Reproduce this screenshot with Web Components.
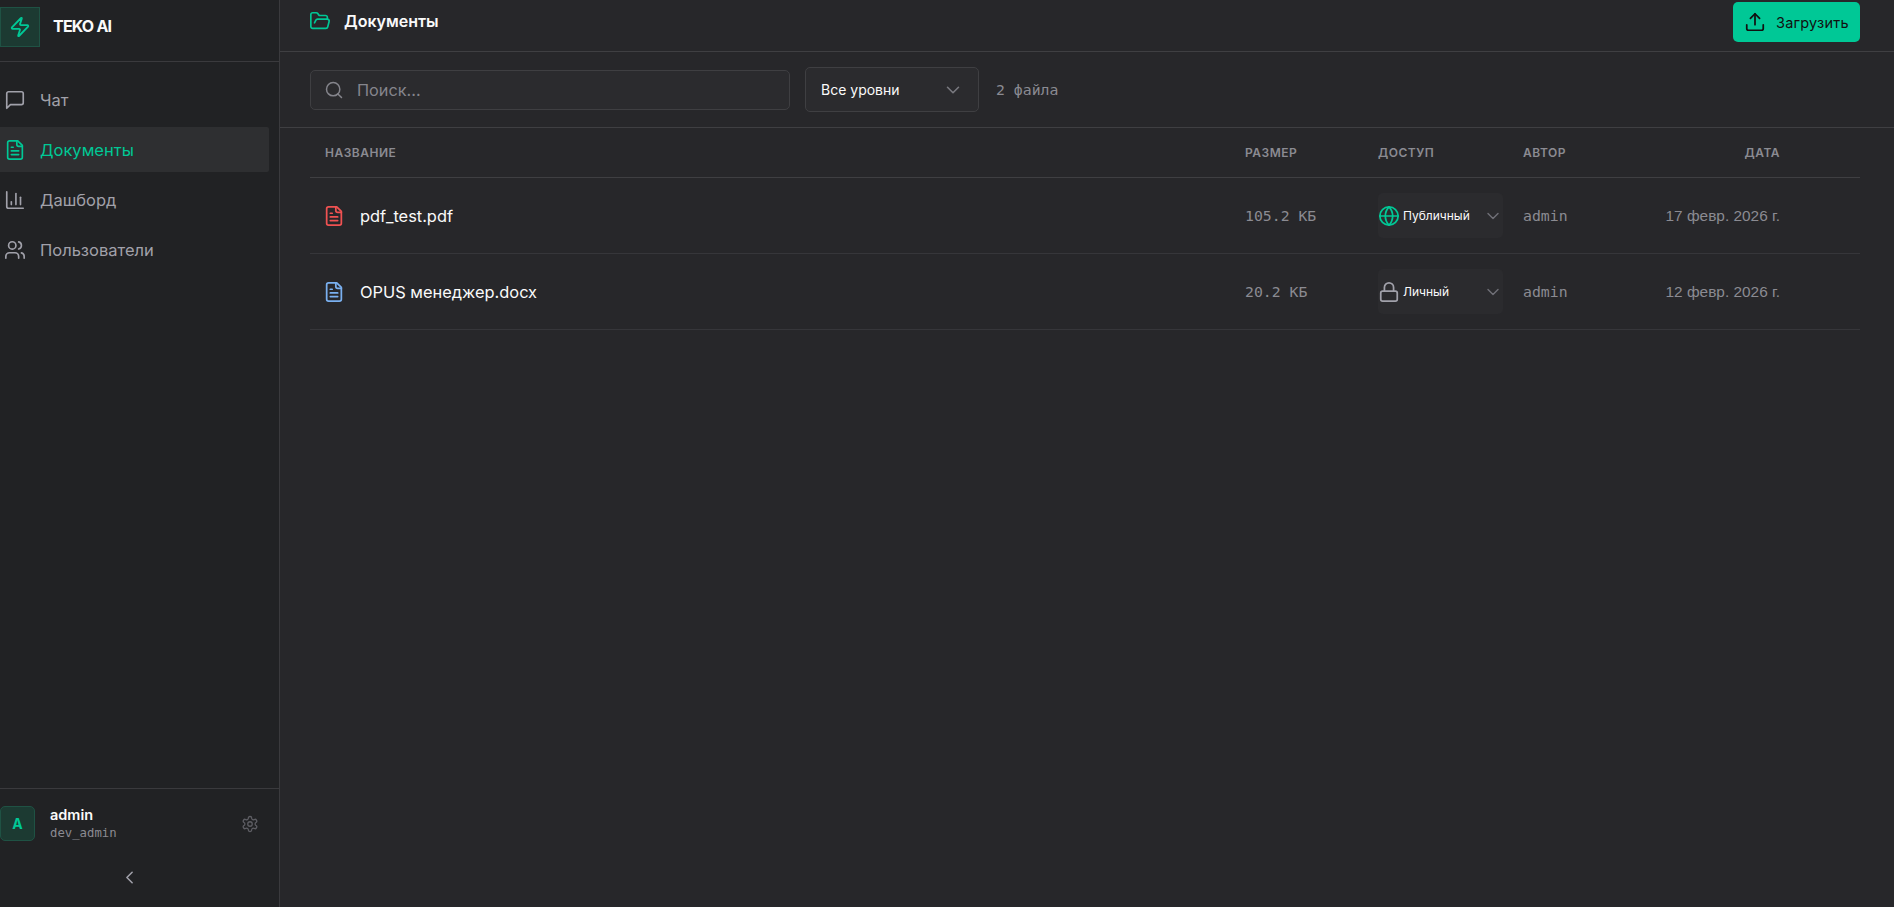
<!DOCTYPE html>
<html>
<head>
<meta charset="utf-8">
<title>TEKO AI - Документы</title>
<style>
    html, body { margin: 0; height: 100%; background: #27272a; overflow: hidden; }
    body { font-family: "Inter", "Noto Sans", sans-serif; color: #fafafa; }
</style>
</head>
<body>
<app-shell>
    <side-bar slot="side"></side-bar>
    <docs-page slot="main"></docs-page>
</app-shell>

<script>
    const ICONS = {
        bolt: '<path d="M4 14a1 1 0 0 1-.78-1.63l9.9-10.2a.5.5 0 0 1 .86.46l-1.92 6.02A1 1 0 0 0 13 10h7a1 1 0 0 1 .78 1.63l-9.9 10.2a.5.5 0 0 1-.86-.46l1.92-6.02A1 1 0 0 0 11 14z"/>',
        chat: '<path d="M21 15a2 2 0 0 1-2 2H7l-4 4V5a2 2 0 0 1 2-2h14a2 2 0 0 1 2 2z"/>',
        file: '<path d="M15 2H6a2 2 0 0 0-2 2v16a2 2 0 0 0 2 2h12a2 2 0 0 0 2-2V7Z"/><path d="M14 2v4a2 2 0 0 0 2 2h4"/><path d="M16 13H8"/><path d="M16 17H8"/><path d="M10 9H8"/>',
        chart: '<path d="M3 3v16a2 2 0 0 0 2 2h16"/><path d="M18 17V9"/><path d="M13 17V5"/><path d="M8 17v-3"/>',
        users: '<path d="M16 21v-2a4 4 0 0 0-4-4H6a4 4 0 0 0-4 4v2"/><circle cx="9" cy="7" r="4"/><path d="M22 21v-2a4 4 0 0 0-3-3.87"/><path d="M16 3.13a4 4 0 0 1 0 7.75"/>',
        gear: '<path d="M12.22 2h-.44a2 2 0 0 0-2 2v.18a2 2 0 0 1-1 1.73l-.43.25a2 2 0 0 1-2 0l-.15-.08a2 2 0 0 0-2.73.73l-.22.38a2 2 0 0 0 .73 2.73l.15.1a2 2 0 0 1 1 1.72v.51a2 2 0 0 1-1 1.74l-.15.09a2 2 0 0 0-.73 2.73l.22.38a2 2 0 0 0 2.73.73l.15-.08a2 2 0 0 1 2 0l.43.25a2 2 0 0 1 1 1.73V20a2 2 0 0 0 2 2h.44a2 2 0 0 0 2-2v-.18a2 2 0 0 1 1-1.73l.43-.25a2 2 0 0 1 2 0l.15.08a2 2 0 0 0 2.73-.73l.22-.39a2 2 0 0 0-.73-2.73l-.15-.08a2 2 0 0 1-1-1.74v-.5a2 2 0 0 1 1-1.74l.15-.09a2 2 0 0 0 .73-2.73l-.22-.38a2 2 0 0 0-2.73-.73l-.15.08a2 2 0 0 1-2 0l-.43-.25a2 2 0 0 1-1-1.73V4a2 2 0 0 0-2-2z"/><circle cx="12" cy="12" r="3"/>',
        left: '<path d="m15 18-6-6 6-6"/>',
        down: '<path d="m6 9 6 6 6-6"/>',
        folder: '<path d="m6 14 1.5-2.9A2 2 0 0 1 9.24 10H20a2 2 0 0 1 1.94 2.5l-1.54 6a2 2 0 0 1-1.95 1.5H4a2 2 0 0 1-2-2V5a2 2 0 0 1 2-2h3.9a2 2 0 0 1 1.69.9l.81 1.2a2 2 0 0 0 1.67.9H18a2 2 0 0 1 2 2v2"/>',
        upload: '<path d="M21 15v4a2 2 0 0 1-2 2H5a2 2 0 0 1-2-2v-4"/><polyline points="17 8 12 3 7 8"/><line x1="12" x2="12" y1="3" y2="15"/>',
        search: '<circle cx="11" cy="11" r="8"/><path d="m21 21-4.3-4.3"/>',
        globe: '<circle cx="12" cy="12" r="10"/><path d="M12 2a14.5 14.5 0 0 0 0 20 14.5 14.5 0 0 0 0-20"/><path d="M2 12h20"/>',
        lock: '<rect width="18" height="11" x="3" y="11" rx="2" ry="2"/><path d="M7 11V7a5 5 0 0 1 10 0v4"/>'
    };

    class AppIcon extends HTMLElement {
        connectedCallback() {
            const size = this.getAttribute('size') || 18;
            const weight = this.getAttribute('weight') || 2;
            this.attachShadow({ mode: 'open' }).innerHTML = `
            <style>
                :host { display: inline-flex; flex: none; color: inherit; }
                svg { display: block; }
            </style>
            <svg width="${size}" height="${size}" viewBox="0 0 24 24" fill="none" stroke="currentColor"
                stroke-width="${weight}" stroke-linecap="round" stroke-linejoin="round">${ICONS[this.getAttribute('name')]}</svg>`;
        }
    }
    customElements.define('app-icon', AppIcon);

    class AppShell extends HTMLElement {
        constructor() {
            super();
            this.attachShadow({ mode: 'open' }).innerHTML = `
            <style>
                :host { display: flex; height: 907px; width: 1894px; overflow: hidden; }
                ::slotted([slot=side]) { flex: none; }
                ::slotted([slot=main]) { flex: 1; min-width: 0; }
            </style>
            <slot name="side"></slot>
            <slot name="main"></slot>`;
        }
    }
    customElements.define('app-shell', AppShell);

    class NavItem extends HTMLElement {
        connectedCallback() {
            const active = this.hasAttribute('active');
            this.attachShadow({ mode: 'open' }).innerHTML = `
            <style>
                :host { display: flex; align-items: center; gap: 14px; height: 45px; padding-left: 4px;
                    font-size: 16.5px; color: ${active ? '#00c896' : '#a1a1aa'};
                    background: ${active ? '#2e2f31' : 'transparent'}; border-radius: 0 2px 2px 0; }
            </style>
            <app-icon name="${this.getAttribute('icon')}" size="22" weight="1.8"></app-icon>
            <slot></slot>`;
        }
    }
    customElements.define('nav-item', NavItem);

    class SideBar extends HTMLElement {
        constructor() {
            super();
            this.attachShadow({ mode: 'open' }).innerHTML = `
            <style>
                :host { display: flex; flex-direction: column; width: 279px; height: 907px;
                    background: #212224; border-right: 1px solid #3a3a3d; }
                .brand { display: flex; align-items: center; gap: 13px; height: 62px; padding-bottom: 7px; box-sizing: border-box;
                    border-bottom: 1px solid #3a3a3d; }
                .logo { width: 40px; height: 40px; box-sizing: border-box; display: flex; align-items: center; justify-content: center;
                    background: #1c3a32; border: 1px solid #1f5244; color: #00c896; }
                .name { font-weight: 700; font-size: 16px; letter-spacing: -0.8px; color: #fafafa; margin-top: -2px; }
                nav { flex: 1; display: flex; flex-direction: column; gap: 5px; padding: 15px 10px 0 0; }
                .user { display: flex; align-items: center; border-top: 1px solid #3a3a3d; height: 80px; box-sizing: border-box; padding: 0 20px 10px 0; }
                .avatar { width: 35px; height: 35px; box-sizing: border-box; border: 1px solid #1f5244; background: #1c3a32; border-radius: 5px;
                    color: #00c896; font-weight: 700; font-size: 14px; display: flex; align-items: center; justify-content: center; }
                .who { flex: 1; margin-left: 15px; }
                .who b { display: block; font-size: 14.5px; font-weight: 600; color: #fafafa; line-height: 19px; }
                .who span { display: block; font: 12.3px "DejaVu Sans Mono", monospace; color: #8b8b92; line-height: 19px; }
                .gear { color: #5e5e64; }
                .collapse { display: flex; justify-content: center; height: 40px; color: #a1a1aa; align-items: flex-start; padding-right: 20px; margin-top: -1px; }
            </style>
            <div class="brand">
                <div class="logo"><app-icon name="bolt" size="22" weight="2"></app-icon></div>
                <span class="name">TEKO AI</span>
            </div>
            <nav>
                <nav-item icon="chat">Чат</nav-item>
                <nav-item icon="file" active>Документы</nav-item>
                <nav-item icon="chart">Дашборд</nav-item>
                <nav-item icon="users">Пользователи</nav-item>
            </nav>
            <div class="user">
                <div class="avatar">A</div>
                <div class="who"><b>admin</b><span>dev_admin</span></div>
                <app-icon class="gear" name="gear" size="18" weight="1.7"></app-icon>
            </div>
            <div class="collapse"><app-icon name="left" size="21" weight="1.8"></app-icon></div>`;
        }
    }
    customElements.define('side-bar', SideBar);

    class AccessSelect extends HTMLElement {
        connectedCallback() {
            const pub = this.getAttribute('level') === 'public';
            this.attachShadow({ mode: 'open' }).innerHTML = `
            <style>
                :host { display: flex; align-items: center; width: 125px; height: 45px; box-sizing: border-box;
                    background: #2b2b2e; border-radius: 5px; font-size: 12px; color: #fafafa; }
                .ic { color: ${pub ? '#00c896' : '#a1a1aa'}; margin-right: 3px; display: flex; }
                span { flex: 1; }
                .chev { color: #6f6f76; }
            </style>
            <app-icon class="ic" name="${pub ? 'globe' : 'lock'}" size="22" weight="1.9"></app-icon>
            <span><slot></slot></span>
            <app-icon class="chev" name="down" size="20" weight="1.7"></app-icon>`;
        }
    }
    customElements.define('access-select', AccessSelect);

    class DocRow extends HTMLElement {
        connectedCallback() {
            const color = this.getAttribute('tone');
            const level = this.getAttribute('level');
            this.attachShadow({ mode: 'open' }).innerHTML = `
            <style>
                :host { display: grid; grid-template-columns: var(--cols); align-items: center; height: 75px;
                    border-bottom: 1px solid #36363a; }
                .name { display: flex; align-items: center; gap: 15px; padding-left: 13px; font-size: 16.4px; color: #fafafa; }
                .name app-icon { color: ${color}; }
                .mono { font: 14.8px "DejaVu Sans Mono", monospace; color: #8b8b92; }
                .date { font: 15.4px "Liberation Sans", Arial, sans-serif; color: #8b8b92; text-align: right; padding-right: 80px; white-space: nowrap; }
            </style>
            <div class="name"><app-icon name="file" size="22" weight="1.9"></app-icon>${this.getAttribute('file')}</div>
            <div class="mono">${this.getAttribute('size-text')}</div>
            <div><access-select level="${level}">${level === 'public' ? 'Публичный' : 'Личный'}</access-select></div>
            <div class="mono">${this.getAttribute('author')}</div>
            <div class="date">${this.getAttribute('date')}</div>`;
        }
    }
    customElements.define('doc-row', DocRow);

    class DocsPage extends HTMLElement {
        constructor() {
            super();
            this.attachShadow({ mode: 'open' }).innerHTML = `
            <style>
                :host { display: flex; flex-direction: column; height: 907px; background: #27272a; --cols: 935px 133px 145px 105px 1fr; }
                header { display: flex; align-items: center; height: 51px; border-bottom: 1px solid #3f3f42; padding: 0 34px 0 29px; }
                header .t { flex: 1; display: flex; align-items: center; gap: 13px; font-weight: 600; font-size: 16px; color: #fafafa; margin-top: -9px; }
                header .t app-icon { color: #00c896; }
                .upload { display: flex; align-items: center; gap: 10px; height: 40px; width: 127px; box-sizing: border-box; padding-left: 11px;
                    background: #00c896; color: #111; border-radius: 5px; font-size: 14.5px; letter-spacing: .2px; margin-top: -7px; }
                .tools { display: flex; align-items: center; height: 75px; border-bottom: 1px solid #3f3f42; padding: 0 30px; }
                .search { width: 480px; height: 40px; box-sizing: border-box; display: flex; align-items: center; gap: 13px; padding-left: 13px;
                    background: #2b2b2e; border: 1px solid #3f3f42; border-radius: 5px; color: #85858c; font-size: 16.3px; }
                .levels { width: 174px; height: 45px; box-sizing: border-box; margin-left: 15px; display: flex; align-items: center; justify-content: space-between;
                    padding: 0 14px 0 15px; background: #2b2b2e; border: 1px solid #3f3f42; border-radius: 5px; font-size: 14px; color: #fafafa; }
                .levels app-icon { color: #7a7a80; }
                .count { margin-left: 17px; font: 14.8px "DejaVu Sans Mono", monospace; color: #8b8b92; }
                .table { padding: 0 34px 0 30px; }
                .head { display: grid; grid-template-columns: var(--cols); align-items: center; height: 49px;
                    border-bottom: 1px solid #3f3f42; font-size: 12px; font-weight: 600; letter-spacing: 0.5px; color: #8b8b92; }
                .head div:first-child { padding-left: 15px; }
                .head .r { text-align: right; padding-right: 80px; }
            </style>
            <header>
                <div class="t"><app-icon name="folder" size="22" weight="1.8"></app-icon>Документы</div>
                <div class="upload"><app-icon name="upload" size="22" weight="1.9"></app-icon>Загрузить</div>
            </header>
            <div class="tools">
                <div class="search"><app-icon name="search" size="20" weight="1.8"></app-icon>Поиск...</div>
                <div class="levels">Все уровни<app-icon name="down" size="22" weight="1.7"></app-icon></div>
                <div class="count">2 файла</div>
            </div>
            <div class="table">
                <div class="head"><div>НАЗВАНИЕ</div><div>РАЗМЕР</div><div>ДОСТУП</div><div>АВТОР</div><div class="r">ДАТА</div></div>
                <doc-row file="pdf_test.pdf" tone="#f05252" level="public" size-text="105.2 КБ" author="admin" date="17 февр. 2026 г."></doc-row>
                <doc-row file="OPUS менеджер.docx" tone="#7ab0f0" level="private" size-text="20.2 КБ" author="admin" date="12 февр. 2026 г."></doc-row>
            </div>`;
        }
    }
    customElements.define('docs-page', DocsPage);
</script>
</body>
</html>
